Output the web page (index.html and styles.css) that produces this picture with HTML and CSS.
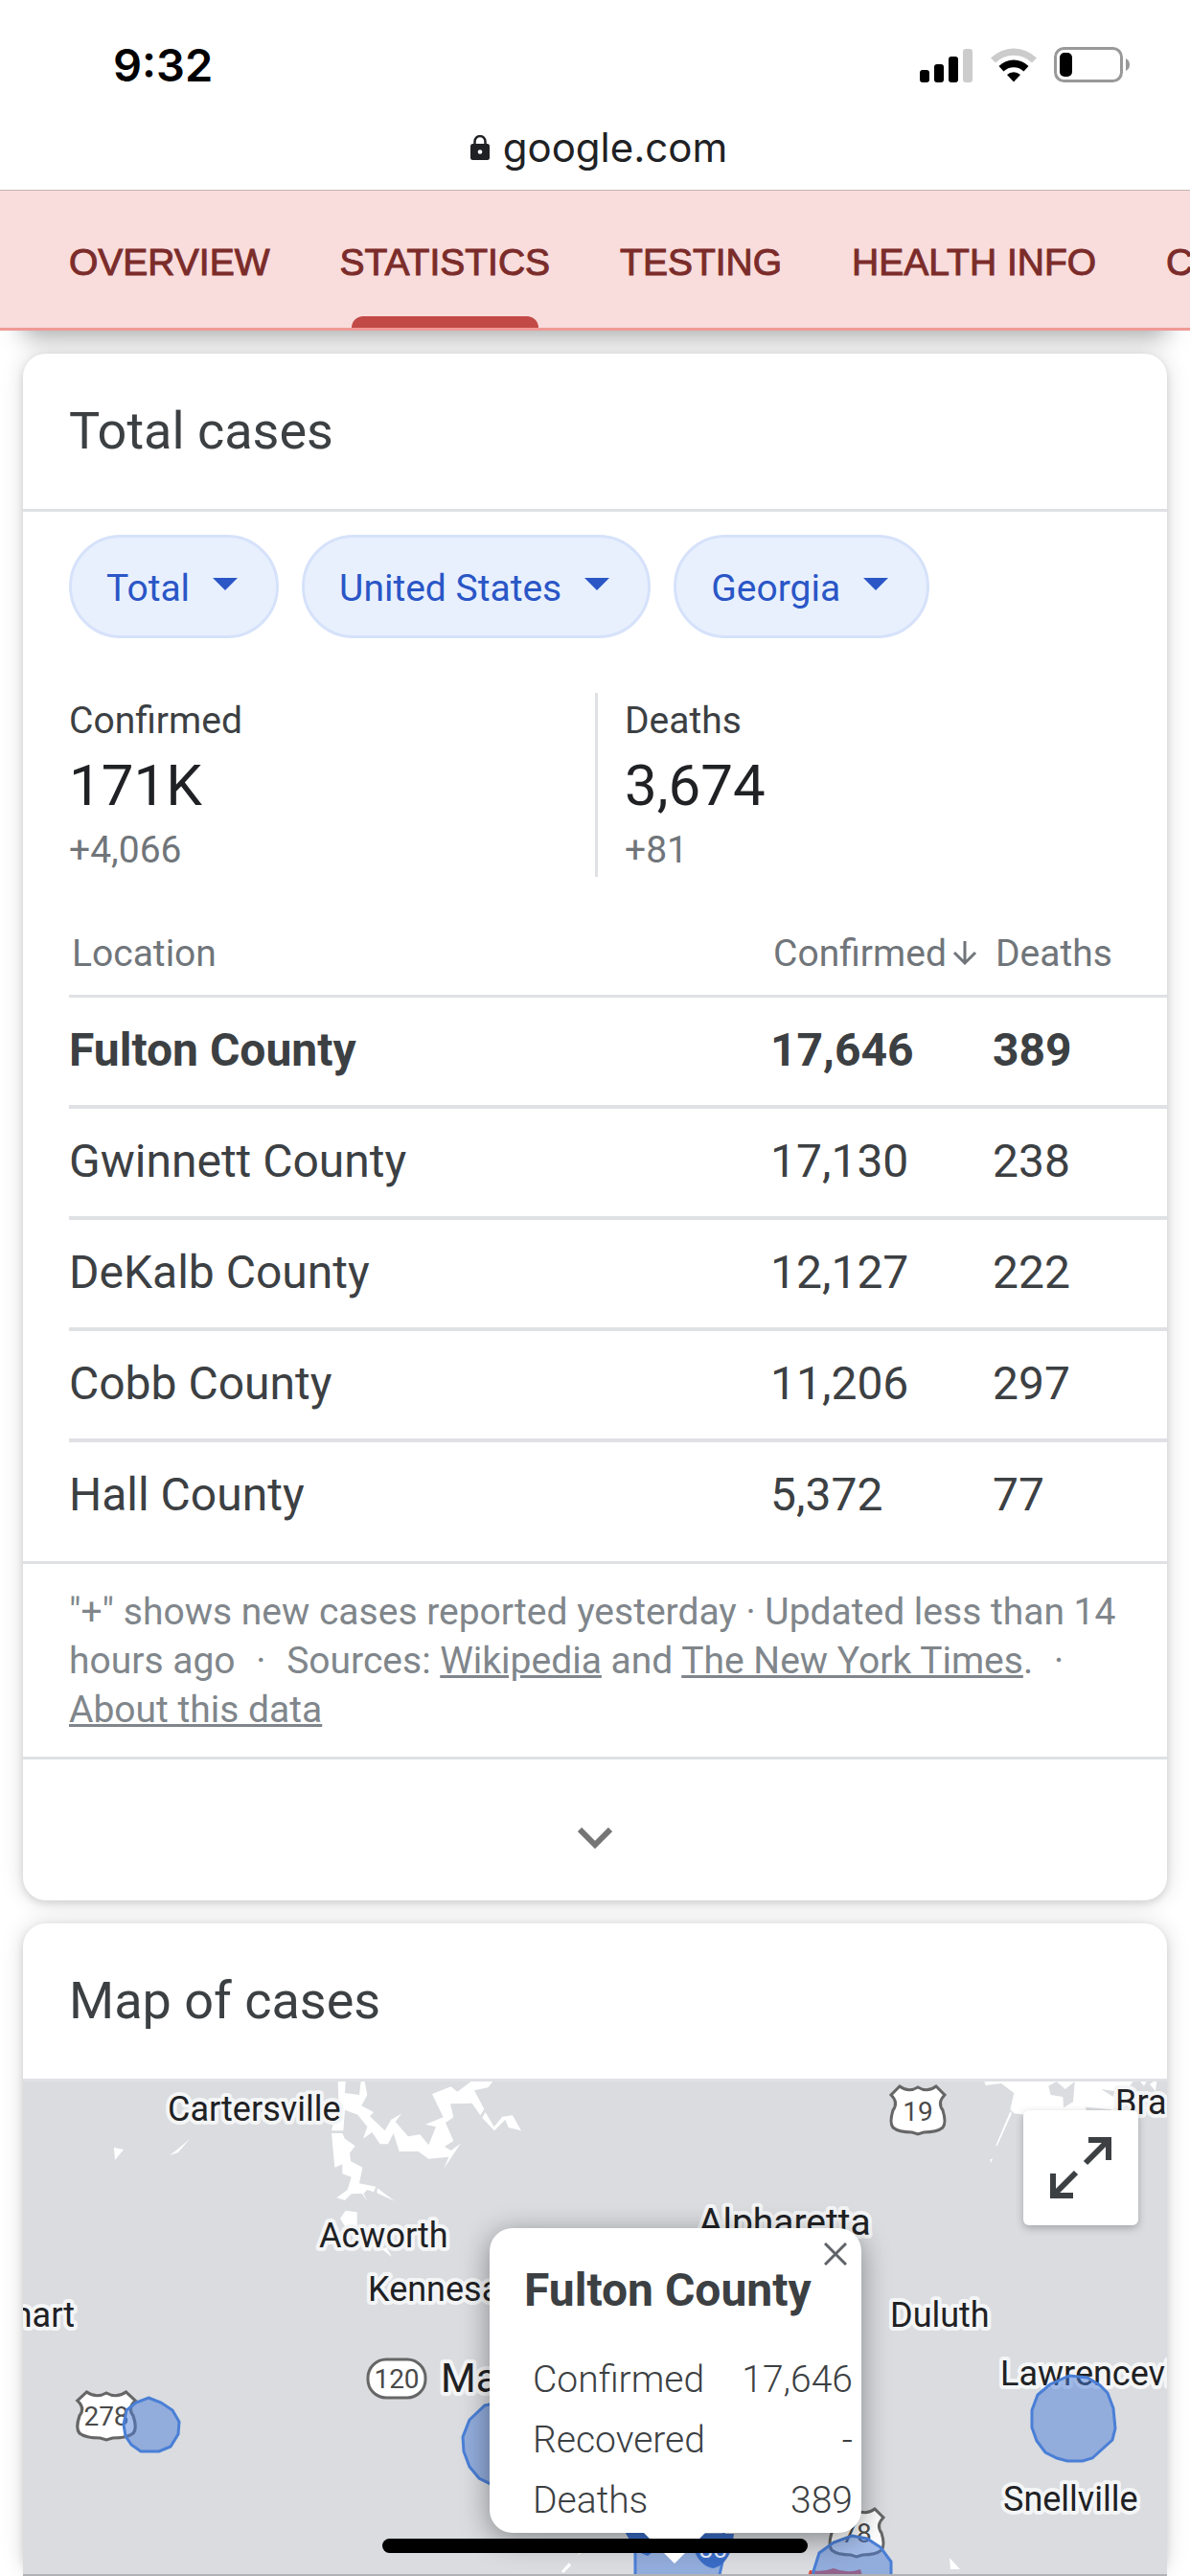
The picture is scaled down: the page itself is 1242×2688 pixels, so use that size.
FILE: index.html
```html
<!DOCTYPE html>
<html lang="en">
<head>
    <meta charset="UTF-8">
    <meta name="viewport" content="width=device-width, initial-scale=1.0">
    <title>Coronavirus statistics</title>
    <link rel="stylesheet" href="styles.css">
</head>
<body>
    <header class="status-bar">
        <span class="time">9:32</span>
        <div class="status-icons">
            <svg width="56" height="36" viewBox="0 0 56 36">
                <rect x="0" y="23" width="10" height="13" rx="3"/>
                <rect x="15" y="17" width="10" height="19" rx="3"/>
                <rect x="30" y="9" width="10" height="27" rx="3"/>
                <rect x="45" y="1" width="10" height="35" rx="3" fill="#ccc"/>
            </svg>
            <svg width="48" height="36" viewBox="0 0 48 36">
                <path d="M0 10.500 A34 34 0 0 1 48 10.500 L43 15.500 A27 27 0 0 0 5 15.500 Z" fill="#ccc"/>
                <path d="M8.500 19 A22 22 0 0 1 39.500 19 L34.500 24.500 A15 15 0 0 0 13.500 24.500 Z"/>
                <path d="M17 28 A10 10 0 0 1 31 28 L24 35.500 Z"/>
            </svg>
            <svg width="80" height="38" viewBox="0 0 80 38">
                <rect x="1.500" y="1.500" width="69" height="34" rx="9" fill="none" stroke="#999" stroke-width="3"/>
                <rect x="6" y="6" width="13" height="25" rx="5"/>
                <path d="M75 12 Q79 14 79 18.500 Q79 23 75 25 Z" fill="#999"/>
            </svg>
        </div>
    </header>
    <div class="address-bar">
        <svg width="20" height="26" viewBox="0 0 20 26">
            <path d="M4.500 10 V6.500 A5.500 5.500 0 0 1 15.500 6.500 V10" fill="none" stroke="#202124" stroke-width="2.500"/>
            <rect x="0" y="9" width="20" height="17" rx="2.500" fill="#202124"/>
            <circle cx="10" cy="17.500" r="2.300" fill="#fff"/>
        </svg>
        <span>google.com</span>
    </div>
    <nav class="tabs">
        <a href="#">OVERVIEW</a>
        <a href="#" class="active">STATISTICS</a>
        <a href="#">TESTING</a>
        <a href="#">HEALTH INFO</a>
        <a href="#">COPING</a>
    </nav>

    <main>
        <section class="card">
            <h2>Total cases</h2>
            <div class="filters">
                <button class="chip">Total <span class="caret"></span></button>
                <button class="chip">United States <span class="caret"></span></button>
                <button class="chip">Georgia <span class="caret"></span></button>
            </div>
            <div class="stats">
                <div class="stat">
                    <div class="label">Confirmed</div>
                    <div class="value">171K</div>
                    <div class="change">+4,066</div>
                </div>
                <div class="stat">
                    <div class="label">Deaths</div>
                    <div class="value">3,674</div>
                    <div class="change">+81</div>
                </div>
            </div>
            <table class="locations">
                <thead>
                    <tr>
                        <th class="place">Location</th>
                        <th class="confirmed">Confirmed<svg width="26" height="28" viewBox="0 0 26 28"><path d="M13 2 V25 M2 14 L13 25 L24 14" fill="none" stroke="#70757a" stroke-width="3"/></svg></th>
                        <th class="deaths">Deaths</th>
                    </tr>
                </thead>
                <tbody>
                    <tr class="selected"><td>Fulton County</td><td>17,646</td><td>389</td></tr>
                    <tr><td>Gwinnett County</td><td>17,130</td><td>238</td></tr>
                    <tr><td>DeKalb County</td><td>12,127</td><td>222</td></tr>
                    <tr><td>Cobb County</td><td>11,206</td><td>297</td></tr>
                    <tr><td>Hall County</td><td>5,372</td><td>77</td></tr>
                </tbody>
            </table>
            <p class="sources">"+" shows new cases reported yesterday · Updated less than 14 hours ago <span class="dot">·</span> Sources: <a href="#">Wikipedia</a> and <a href="#">The New York Times</a>. <span class="dot">·</span> <a href="#">About this data</a></p>
            <button class="expand" aria-label="Show more">
                <svg width="36" height="22" viewBox="0 0 36 22"><path d="M2 2 L18 18 L34 2" fill="none" stroke="#757575" stroke-width="6"/></svg>
            </button>
        </section>

        <section class="card">
            <h2>Map of cases</h2>
            <div class="map">
                <svg class="map-canvas" width="1194" height="516" viewBox="24 2172 1194 516">
                    <defs>
                        <path id="us-shield" d="M-19 -24 Q-10 -17 0 -23 Q10 -17 19 -24 L28 -15 Q20 -7 26 1 Q30 14 26 19 Q20 24 6 24 L0 26 L-6 24 Q-20 24 -26 19 Q-30 14 -26 1 Q-20 -7 -28 -15 Z"/>
                    </defs>
                    <!-- Lake Allatoona -->
                    <g fill="#fff" transform="translate(340 2160) scale(0.3333)">
                        <path d="M38 36 L62 36 L60 72 L105 78 L110 36 L122 36 L130 78 L112 112 L150 132 L138 145 L185 190 L205 155 L237 137 L218 162 L258 208 L295 202 L322 235 L345 178 L312 170 L368 148 L333 75 L392 52 L412 68 L455 36 L523 36 L508 55 L465 64 L496 122 L484 142 L458 104 L390 106 L400 148 L375 165 L400 222 L372 240 L392 252 L422 230 L370 308 L385 272 L322 278 L290 255 L230 255 L212 198 L195 232 L170 232 L145 195 L117 215 L130 178 L100 140 L60 125 L55 190 L18 190 L40 95 Z"/>
                        <path d="M18 198 L52 198 L60 215 L92 238 L75 260 L78 285 L115 305 L105 355 L157 365 L150 382 L130 375 L118 388 L132 412 L113 387 L80 388 L60 408 L34 400 L68 375 L80 335 L52 325 L52 295 L28 305 Z"/>
                        <path d="M162 370 L215 410 L160 385 Z"/>
                        <path d="M500 132 L527 178 L553 146 L585 142 L612 190 L572 180 L562 155 L528 190 L490 150 Z"/>
                        <path d="M62 440 L98 445 L98 490 L60 490 L45 465 Z"/>
                        <path d="M190 555 L207 585 L175 560 Z"/>
                    </g>
                    <!-- Lake Lanier -->
                    <g fill="#fff" transform="translate(1000 2160) scale(0.3333)">
                        <path d="M82 36 L548 36 L530 60 L500 70 L495 100 L500 140 L210 140 L175 136 L163 124 L175 72 L135 42 L86 48 Z"/>
                        <path d="M163 130 L168 136 L122 238 L118 236 Z"/>
                        <path d="M100 280 L108 278 L102 292 Z"/>
                        <path d="M570 36 L590 36 L582 50 Z M600 44 L612 36 L622 36 L618 66 Z"/>
                    </g>
                    <g fill="#dadce0" transform="translate(1000 2160) scale(0.3333)">
                        <path d="M283 50 L308 36 L335 60 L365 36 L360 100 L330 118 L328 84 L290 78 Z"/>
                        <path d="M448 60 L490 66 L486 84 Z"/>
                        <path d="M400 116 L480 124 L480 130 L400 130 Z"/>
                    </g>
                    <path d="M318 36 L350 36 L335 56 Z" fill="#fff" transform="translate(1000 2160) scale(0.3333)"/>
                    <!-- small ponds -->
                    <g fill="#fff">
                        <path d="M119 2241 L129 2243 L120 2254 Z"/>
                        <path d="M198 2232 L186 2246 L177 2249 L185 2243 Z"/>
                        <path d="M991 2669 L1002 2681 L992 2681 Z"/>
                        <path d="M586 2683 L594 2674 L596 2677 L588 2685 Z"/>
                        <path d="M602 2667 L608 2660 L608 2663 Z"/>
                    </g>
                    <!-- road shields -->
                    <g fill="#fff" stroke="#666" stroke-width="3">
                        <use href="#us-shield" transform="translate(111 2520) scale(1.08 1)"/>
                        <use href="#us-shield" x="958" y="2201"/>
                        <use href="#us-shield" x="894" y="2642"/>
                        <rect x="384" y="2462" width="60" height="40" rx="19"/>
                    </g>
                    <g class="road">
                        <text x="111" y="2531">278</text>
                        <text x="958" y="2213">19</text>
                        <text x="894" y="2653">78</text>
                        <text x="414" y="2492">120</text>
                    </g>
                    <g class="towns">
                        <text x="175" y="2213">Cartersville</text>
                        <text x="333" y="2345">Acworth</text>
                        <text x="384" y="2401">Kennesaw</text>
                        <text x="78" y="2428" text-anchor="end">Rockmart</text>
                        <text class="large" x="729" y="2332">Alpharetta</text>
                        <text x="929" y="2428">Duluth</text>
                        <text x="1044" y="2489">Lawrenceville</text>
                        <text x="1047" y="2620">Snellville</text>
                        <text x="1164" y="2206">Braselton</text>
                        <text class="city" x="460" y="2496">Marietta</text>
                    </g>
                    <path d="M845 2682 Q859 2684 870 2680 Q885 2686 898 2681 L900 2688 L843 2688 Z" fill="#d84b42"/>
                    <!-- case bubbles -->
                    <g class="bubbles">
                        <path d="M155 2502 L168 2507 L180 2515 L187 2527 L186 2540 L178 2553 L166 2558 L147 2558 L137 2551 L131 2542 L129 2530 L132 2515 L142 2507 Z"/>
                        <path d="M530 2505 L506 2510 L490 2525 L483 2543 L484 2558 L490 2574 L500 2586 L512 2592 L530 2592 Z"/>
                        <path d="M1116 2479 L1135 2481 L1148 2489 L1156 2497 L1162 2513 L1164 2534 L1161 2546 L1140 2565 L1130 2568 L1114 2568 L1103 2565 L1091 2559 L1082 2547 L1077 2533 L1077 2515 L1083 2499 L1096 2488 Z"/>
                        <path d="M889 2646 L905 2649 L919 2658 L930 2673 L930 2700 L848 2700 L849 2683 L855 2664 L870 2653 Z"/>
                        <path d="M663 2640 L755 2640 L757 2660 L748 2700 L663 2700 Z"/>
                    </g>
                    <!-- interstate shields -->
                    <g fill="#3a6cc6">
                        <path d="M651 2640 L680 2640 L690 2656 L676 2667 L664 2662 Z"/>
                        <path d="M733 2644 L766 2644 L764 2658 Q758 2677 744 2680 Q730 2677 724 2660 Z"/>
                    </g>
                    <text class="interstate" x="744" y="2669">85</text>
                    <path d="M24 2687 H1218" stroke="#b0b2b6" stroke-width="2"/>
                </svg>
                <button class="fullscreen" aria-label="Full screen">
                    <svg width="66" height="66" viewBox="0 0 66 66" fill="none" stroke="#3c4043" stroke-width="6"><path d="M41 4 H62 V25 M61 5 L38 28 M4 39 V62 H25 M5 61 L28 38"/></svg>
                </button>
                <div class="popup">
                    <button class="close" aria-label="Close"><svg width="24" height="24" viewBox="0 0 24 24"><path d="M1 1 L23 23 M23 1 L1 23" stroke="#5f6368" stroke-width="3"/></svg></button>
                    <h3>Fulton County</h3>
                    <dl>
                        <dt>Confirmed</dt><dd>17,646</dd>
                        <dt>Recovered</dt><dd>-</dd>
                        <dt>Deaths</dt><dd>389</dd>
                    </dl>
                </div>
            </div>
        </section>
    </main>
    <div class="home-indicator"></div>
</body>
</html>
```

FILE: styles.css
```css
* {
    box-sizing: border-box;
}

body {
    margin: 0;
    height: 100vh;
    overflow: hidden;
    position: relative;
    background: #fff;
    color: #3c4043;
    font-family: Roboto, sans-serif;
    font-size: 39px;
}

button {
    font: inherit;
    border: none;
    cursor: pointer;
}

svg {
    display: block;
}

.status-bar {
    display: flex;
    justify-content: space-between;
    align-items: center;
    height: 135px;
    padding: 0 62px 0 118px;
    color: #000;
    font-family: Inter, sans-serif;
    font-size: 47px;
    font-weight: 600;
}

.status-icons {
    display: flex;
    align-items: center;
    gap: 18px;
}

.address-bar {
    display: flex;
    justify-content: center;
    align-items: center;
    gap: 14px;
    height: 63px;
    padding-bottom: 26px;
    padding-left: 8px;
    color: #202124;
    font-family: Inter, sans-serif;
    font-size: 42px;
}

.tabs {
    position: relative;
    display: flex;
    gap: 73px;
    height: 147px;
    padding-left: 72px;
    overflow: hidden;
    background: #f9dcdc;
    border-top: 1px solid #c4b4b4;
    border-bottom: 3px solid #f09a96;
    box-shadow: 0 30px 24px -24px rgba(0, 0, 0, 0.35);
    white-space: nowrap;
}

.tabs a {
    position: relative;
    color: #7b2c2a;
    line-height: 150px;
    font-family: "Liberation Sans", Arial, sans-serif;
    font-size: 39px;
    -webkit-text-stroke: 1px #7b2c2a;
    text-decoration: none;
}

.tabs .active::after {
    content: "";
    position: absolute;
    left: 12px;
    right: 12px;
    bottom: 0;
    height: 12px;
    border-radius: 12px 12px 0 0;
    background: #c24a46;
}

main {
    position: relative;
    display: flex;
    flex-direction: column;
    gap: 24px;
    padding: 24px;
}

.card {
    border-radius: 24px;
    background: #fff;
    box-shadow: 0 3px 9px rgba(0, 0, 0, 0.12), 0 0 24px rgba(0, 0, 0, 0.14);
}

.card h2 {
    margin: 0;
    padding: 0 48px;
    border-bottom: 3px solid #dfe1e5;
    font-size: 54px;
    font-weight: 400;
    line-height: 162px;
}

.filters {
    display: flex;
    gap: 24px;
    padding: 24px 48px 0;
}

.chip {
    display: flex;
    align-items: center;
    gap: 24px;
    height: 108px;
    padding: 3px 40px 0 36px;
    border: 3px solid #d6e2fa;
    border-radius: 54px;
    background: #e8f0fe;
    color: #2a56c6;
}

.caret {
    margin-bottom: 8px;
    border: 13px solid transparent;
    border-top-color: #2a56c6;
    border-bottom: none;
}

.stats {
    display: flex;
    padding-top: 57px;
}

.stat {
    width: 50%;
    height: 192px;
    padding: 1px 0 0 48px;
}

.stat + .stat {
    padding-left: 28px;
    border-left: 3px solid #dfe1e5;
}

.label {
    line-height: 56px;
}

.value {
    color: #202124;
    font-size: 60px;
    line-height: 80px;
}

.change {
    color: #70757a;
    line-height: 54px;
}

.locations {
    width: calc(100% - 48px);
    margin: 36px 0 0 48px;
    border-collapse: separate;
    border-spacing: 0;
    table-layout: fixed;
}

.locations th {
    height: 90px;
    padding: 0 0 0 3px;
    border-bottom: 3px solid #dfe1e5;
    color: #70757a;
    font-weight: 400;
    text-align: left;
    white-space: nowrap;
}

.locations th svg {
    display: inline-block;
    margin-left: 6px;
}

.confirmed {
    width: 232px;
}

.deaths {
    width: 182px;
}

.locations td {
    height: 116px;
    padding: 0 0 3px;
    border-bottom: 4px solid #dfe1e5;
    font-size: 48px;
}

.locations tr:last-child td {
    border-bottom-color: transparent;
}

.selected td {
    font-weight: 700;
}

.sources {
    margin: 8px 0 0;
    padding: 25px 48px 23px;
    border-top: 3px solid #dfe1e5;
    border-bottom: 3px solid #dfe1e5;
    color: #80868b;
    line-height: 51px;
}

.sources a {
    color: inherit;
}

.dot {
    margin: 0 12px;
}

.expand {
    display: flex;
    justify-content: center;
    align-items: center;
    width: 100%;
    height: 147px;
    padding-top: 18px;
    background: none;
}

.map {
    position: relative;
    height: 516px;
    overflow: hidden;
    background: #dadce0;
}

.towns {
    fill: #202124;
    stroke: #f4f5f6;
    stroke-width: 8px;
    stroke-linejoin: round;
    paint-order: stroke;
    font-size: 36px;
}

.towns .large {
    font-size: 39px;
}

.towns .city {
    font-size: 42px;
}

.road {
    fill: #4a4a4a;
    font-size: 28px;
    text-anchor: middle;
}

.interstate {
    fill: #e3ecfb;
    font-size: 26px;
    text-anchor: middle;
}

.bubbles {
    fill: rgba(74, 124, 214, 0.5);
    stroke: #4a7fd6;
    stroke-width: 3px;
}

.fullscreen {
    position: absolute;
    top: 30px;
    right: 30px;
    display: flex;
    justify-content: center;
    align-items: center;
    width: 120px;
    height: 120px;
    padding: 0;
    border-radius: 6px;
    background: #fff;
    box-shadow: 0 3px 9px rgba(0, 0, 0, 0.25);
}

.popup {
    position: absolute;
    left: 487px;
    top: 153px;
    width: 388px;
    height: 318px;
    padding: 34px 9px 0 36px;
    border-radius: 24px;
    background: #fff;
    box-shadow: 0 6px 30px rgba(0, 0, 0, 0.4);
}

.popup::after {
    content: "";
    position: absolute;
    left: 160px;
    top: 317px;
    border: 33px solid transparent;
    border-top-color: #fff;
    border-bottom: none;
}

.popup h3 {
    margin: 0 0 31px;
    font-size: 48px;
    font-weight: 700;
    line-height: 62px;
}

.popup dl {
    display: grid;
    grid-template-columns: 1fr auto;
    margin: 0;
    padding-left: 9px;
    font-weight: 300;
    line-height: 63px;
}

.popup dd {
    margin: 0;
    text-align: right;
}

.close {
    position: absolute;
    top: 15px;
    right: 15px;
    padding: 0;
    background: none;
}

.home-indicator {
    position: absolute;
    left: 50%;
    bottom: 24px;
    width: 444px;
    height: 15px;
    margin-left: -222px;
    border-radius: 8px;
    background: #000;
}
```
